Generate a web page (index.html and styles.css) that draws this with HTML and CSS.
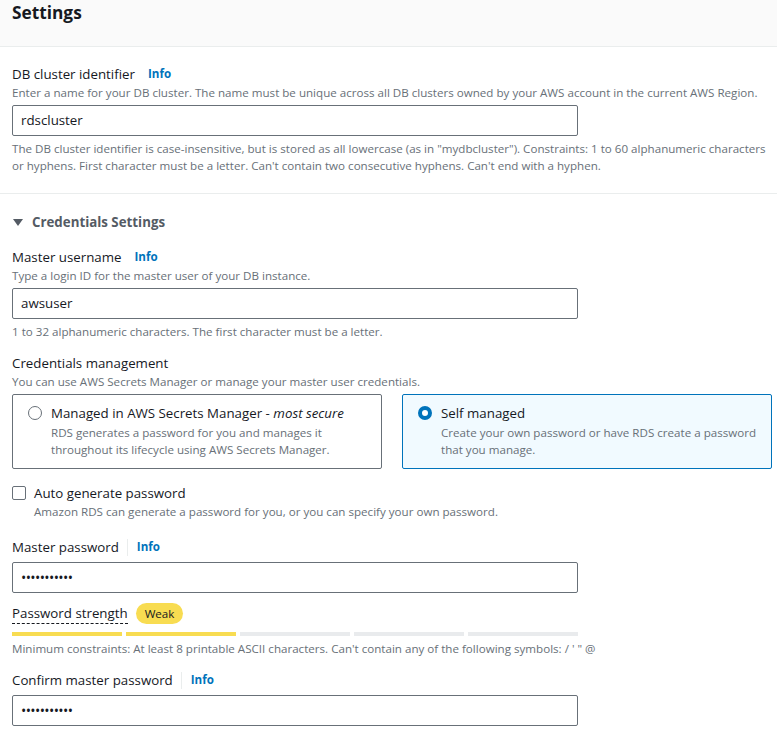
FILE: index.html
```html
<!DOCTYPE html>
<html>
<head>
<meta charset="utf-8">
<link rel="stylesheet" href="styles.css">
</head>
<body>
<div class="page">
  <div class="header"><h2 class="title">Settings</h2></div>
  <div class="section">
    <div class="field">
      <div class="label">DB cluster identifier <span class="info">Info</span></div>
      <div class="desc">Enter a name for your DB cluster. The name must be unique across all DB clusters owned by your AWS account in the current AWS Region.</div>
      <div class="input">rdscluster</div>
      <div class="constraint">The DB cluster identifier is case-insensitive, but is stored as all lowercase (as in "mydbcluster"). Constraints: 1 to 60 alphanumeric characters or hyphens. First character must be a letter. Can't contain two consecutive hyphens. Can't end with a hyphen.</div>
    </div>
  </div>
  <div class="section section-creds">
    <div class="expander"><span class="caret"></span>Credentials Settings</div>
    <div class="field">
      <div class="label">Master username <span class="info">Info</span></div>
      <div class="desc">Type a login ID for the master user of your DB instance.</div>
      <div class="input">awsuser</div>
      <div class="constraint">1 to 32 alphanumeric characters. The first character must be a letter.</div>
    </div>
    <div class="field field-mgmt">
      <div class="label">Credentials management</div>
      <div class="desc">You can use AWS Secrets Manager or manage your master user credentials.</div>
      <div class="tiles">
        <div class="tile">
          <span class="radio"></span>
          <div class="tile-body">
            <div class="tile-title">Managed in AWS Secrets Manager - <em>most secure</em></div>
            <div class="tile-desc">RDS generates a password for you and manages it throughout its lifecycle using AWS Secrets Manager.</div>
          </div>
        </div>
        <div class="tile tile-selected">
          <span class="radio radio-on"></span>
          <div class="tile-body">
            <div class="tile-title">Self managed</div>
            <div class="tile-desc">Create your own password or have RDS create a password that you manage.</div>
          </div>
        </div>
      </div>
    </div>
    <div class="check-row">
      <span class="checkbox"></span>
      <div>
        <div class="check-label">Auto generate password</div>
        <div class="desc">Amazon RDS can generate a password for you, or you can specify your own password.</div>
      </div>
    </div>
    <div class="field field-pw">
      <div class="label">Master password <span class="sep"></span><span class="info">Info</span></div>
      <div class="input input-pw">•••••••••••</div>
      <div class="strength-row">
        <span class="strength-label">Password strength</span>
        <span class="badge">Weak</span>
      </div>
      <div class="bars">
        <span class="bar bar-on"></span>
        <span class="bar bar-on"></span>
        <span class="bar"></span>
        <span class="bar"></span>
        <span class="bar"></span>
      </div>
      <div class="constraint">Minimum constraints: At least 8 printable ASCII characters. Can't contain any of the following symbols: / ' " @</div>
    </div>
    <div class="field field-confirm">
      <div class="label">Confirm master password <span class="sep"></span><span class="info">Info</span></div>
      <div class="input input-pw">•••••••••••</div>
    </div>
  </div>
</div>
</body>
</html>
```

FILE: styles.css
```css
* { box-sizing: border-box; }
html, body { margin: 0; padding: 0; background: #ffffff; }
body {
  font-family: "Open Sans", "Noto Sans", Arial, sans-serif;
  color: #16191f;
  width: 777px;
  overflow: hidden;
}
.page { display: flex; flex-direction: column; }
.header {
  background: #fafafa;
  border-bottom: 1px solid #eaeded;
  height: 47px;
  padding: 0 12px;
}
.title {
  margin: 0;
  font-size: 17.3px;
  font-weight: 700;
  line-height: 25px;
  color: #16191f;
}
.section {
  padding: 17px 5px 19px 12px;
  border-bottom: 1px solid #eaeded;
}
.section-creds { border-bottom: none; padding-top: 18px; }
.label {
  font-size: 13.3px;
  line-height: 20px;
  display: flex;
  align-items: center;
}
.info {
  font-size: 11.6px;
  font-weight: 700;
  color: #0073bb;
  margin-left: 13px;
}
.sep {
  display: inline-block;
  width: 1px;
  height: 17px;
  background: #eaeded;
  margin-left: 8px;
  margin-right: -4px;
}
.desc {
  font-size: 11.6px;
  line-height: 17px;
  color: #687078;
}
.input {
  width: 566px;
  height: 31px;
  border: 1px solid #687078;
  border-radius: 2px;
  margin-top: 4px;
  padding: 0 8px;
  font-size: 13.3px;
  line-height: 29px;
  color: #16191f;
}
.input-pw { font-size: 14px; letter-spacing: -0.6px; }
.constraint {
  font-size: 11.6px;
  line-height: 17px;
  color: #687078;
  margin-top: 4px;
}
.expander {
  display: flex;
  align-items: center;
  font-size: 13.3px;
  font-weight: 700;
  color: #545b64;
  line-height: 20px;
}
.caret {
  width: 0; height: 0;
  border-left: 5px solid transparent;
  border-right: 5px solid transparent;
  border-top: 7px solid #545b64;
  margin-right: 9px;
  margin-left: 1px;
}
.section-creds .field { margin-top: 15px; }
.section-creds .field-mgmt { margin-top: 13px; }
.tiles {
  display: grid;
  grid-template-columns: 370px 370px;
  column-gap: 20px;
  margin-top: 4px;
}
.tile {
  border: 1px solid #687078;
  border-radius: 2px;
  padding: 8px 12px 10px 15px;
  display: flex;
  gap: 9px;
  min-height: 75px;
}
.tile-selected { border-color: #0073bb; background: #f1faff; }
.radio {
  flex: none;
  width: 14px; height: 14px;
  border-radius: 50%;
  border: 1.5px solid #687078;
  margin-top: 3px;
  background: #fff;
}
.radio-on { border: 4px solid #0073bb; }
.tile-title { font-size: 13.3px; line-height: 21px; }
.tile-desc { font-size: 11.6px; line-height: 17px; color: #687078; }
.check-row {
  display: flex;
  gap: 8px;
  margin-top: 14px;
}
.checkbox {
  flex: none;
  width: 14px; height: 14px;
  border: 1.5px solid #687078;
  border-radius: 2px;
  margin-top: 3px;
}
.check-label { font-size: 13.3px; line-height: 20px; }
.section-creds .field-pw { margin-top: 17px; }
.field-pw .input { margin-top: 5px; }
.strength-row {
  display: flex;
  align-items: center;
  gap: 8px;
  margin-top: 10px;
}
.strength-label {
  font-size: 13.3px;
  line-height: 19px;
  border-bottom: 1px dashed #16191f;
}
.badge {
  font-size: 11.6px;
  line-height: 21px;
  background: #f8dc51;
  border-radius: 11px;
  padding: 0 9px;
  color: #16191f;
}
.bars {
  display: flex;
  gap: 4px;
  width: 566px;
  margin-top: 8px;
}
.bar { flex: 1; height: 4px; background: #e9ebed; }
.bar-on { background: #f8dc51; }
.section-creds .field-confirm { margin-top: 13px; }
.field-confirm .input { margin-top: 5px; }
```
